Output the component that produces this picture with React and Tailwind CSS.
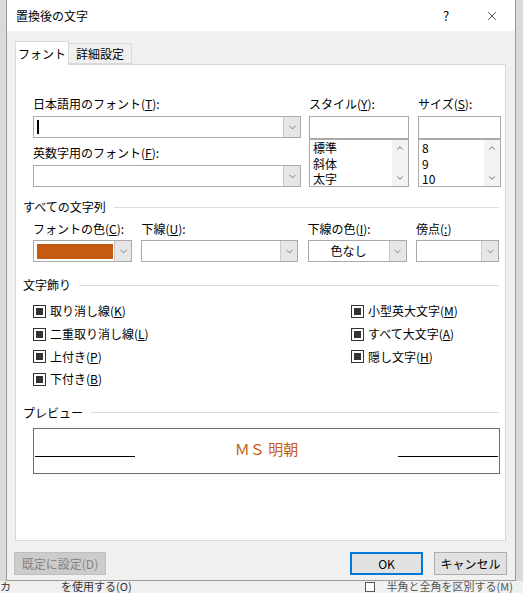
import { ChevronDown, ChevronUp, X } from "lucide-react";

const font = { fontFamily: '"Noto Sans CJK JP", "Noto Sans", sans-serif' };

function DropBtn() {
  return (
    <div className="w-[17px] h-full bg-[#e6e6e6] border-l border-[#c8c8c8] flex items-center justify-center">
      <ChevronDown size={11} strokeWidth={1.5} className="text-[#555]" />
    </div>
  );
}

function Combo({ width, children }) {
  return (
    <div className={`${width} h-[22px] border border-[#a9a9a9] bg-white flex`}>
      <div className="flex-1 flex items-center">{children}</div>
      <DropBtn />
    </div>
  );
}

function ListBox({ width, items }) {
  return (
    <div className={`${width} h-[48px] border border-[#a9a9a9] bg-white flex overflow-hidden`}>
      <div className="flex-1 flex flex-col pl-[3px] leading-[15.5px]">
        {items.map((t) => (
          <span key={t}>{t}</span>
        ))}
      </div>
      <div className="w-[16px] bg-[#f3f3f3] flex flex-col justify-between items-center py-[3px]">
        <ChevronUp size={10} strokeWidth={2} className="text-[#505050]" />
        <ChevronDown size={10} strokeWidth={2} className="text-[#505050]" />
      </div>
    </div>
  );
}

function Header({ title }) {
  return (
    <div className="flex items-center h-[16px] gap-[8px]">
      <span className="leading-[16px]">{title}</span>
      <div className="flex-1 h-px bg-[#dcdcdc]" />
    </div>
  );
}

function Check({ label, keyChar }) {
  return (
    <div className="h-[22.7px] flex items-center gap-[4px]">
      <div className="w-[13px] h-[13px] border border-[#333] flex items-center justify-center">
        <div className="w-[7px] h-[7px] bg-[#333]" />
      </div>
      <span>
        {label}(<span className="underline">{keyChar}</span>)
      </span>
    </div>
  );
}

export default function App() {
  return (
    <div
      className="w-[523px] h-[593px] overflow-hidden bg-[#e9e9e9] flex flex-col text-[12px] text-black"
      style={font}
    >
      <div className="flex h-[581px]">
        <div className="w-[7px] bg-[#dadada] border-r border-[#9a9a9a]" />

        <div className="w-[508px] flex flex-col bg-[#f0f0f0] border-b border-[#9a9a9a]">
          {/* title bar */}
          <div className="h-[31px] bg-white flex items-center pl-[9px]">
            <span className="flex-1 text-[12px]">置換後の文字</span>
            <span className="w-[46px] text-center text-[13px]">?</span>
            <div className="w-[46px] flex justify-center">
              <X size={14} strokeWidth={1.2} />
            </div>
          </div>

          <div className="px-[8px] pt-[9px]">
            {/* tabs */}
            <div className="flex items-end h-[24px]">
              <div className="w-[54px] h-[24px] bg-white border border-b-0 border-[#d9d9d9] flex items-center justify-center relative top-px">
                フォント
              </div>
              <div className="w-[63px] h-[21px] border border-l-0 border-[#d9d9d9] flex items-center justify-center">
                詳細設定
              </div>
            </div>

            {/* panel */}
            <div className="w-[491px] h-[477px] bg-white border border-[#d9d9d9] pt-[31px] pl-[7px] pr-[6px]">
              <div className="flex pl-[10px] gap-[8px]">
                <div className="w-[268px] flex flex-col">
                  <span className="leading-[16px]">
                    日本語用のフォント(<span className="underline">T</span>):
                  </span>
                  <div className="mt-[4px]">
                    <Combo width="w-[268px]">
                      <div className="ml-[3px] w-[2px] h-[14px] bg-black" />
                    </Combo>
                  </div>
                  <span className="leading-[16px] mt-[7px]">
                    英数字用のフォント(<span className="underline">F</span>):
                  </span>
                  <div className="mt-[4px]">
                    <Combo width="w-[268px]" />
                  </div>
                </div>
                <div className="w-[100px] flex flex-col">
                  <span className="leading-[16px]">
                    スタイル(<span className="underline">Y</span>):
                  </span>
                  <div className="mt-[4px] h-[23px] border border-[#a9a9a9] bg-white" />
                  <ListBox width="w-[100px]" items={["標準", "斜体", "太字"]} />
                </div>
                <div className="w-[83px] flex flex-col ml-px">
                  <span className="leading-[16px]">
                    サイズ(<span className="underline">S</span>):
                  </span>
                  <div className="mt-[4px] h-[23px] border border-[#a9a9a9] bg-white" />
                  <ListBox width="w-[83px]" items={["8", "9", "10"]} />
                </div>
              </div>

              <div className="mt-[12px]">
                <Header title="すべての文字列" />
              </div>

              <div className="flex pl-[10px] mt-[6px]">
                <div className="w-[109px] flex flex-col gap-[3px]">
                  <span className="leading-[16px]">
                    フォントの色(<span className="underline">C</span>):
                  </span>
                  <Combo width="w-[99px]">
                    <div className="ml-[3px] w-[76px] h-[15px] bg-[#c55a11]" />
                  </Combo>
                </div>
                <div className="w-[167px] flex flex-col gap-[3px]">
                  <span className="leading-[16px]">
                    下線(<span className="underline">U</span>):
                  </span>
                  <Combo width="w-[157px]" />
                </div>
                <div className="w-[109px] flex flex-col gap-[3px]">
                  <span className="leading-[16px]">
                    下線の色(<span className="underline">I</span>):
                  </span>
                  <Combo width="w-[99px]">
                    <span className="flex-1 text-center">色なし</span>
                  </Combo>
                </div>
                <div className="w-[83px] flex flex-col gap-[3px]">
                  <span className="leading-[16px]">
                    傍点(<span className="underline">:</span>)
                  </span>
                  <Combo width="w-[83px]" />
                </div>
              </div>

              <div className="mt-[15px]">
                <Header title="文字飾り" />
              </div>

              <div className="flex pl-[10px] mt-[7px]">
                <div className="w-[318px] flex flex-col">
                  <Check label="取り消し線" keyChar="K" />
                  <Check label="二重取り消し線" keyChar="L" />
                  <Check label="上付き" keyChar="P" />
                  <Check label="下付き" keyChar="B" />
                </div>
                <div className="flex flex-col">
                  <Check label="小型英大文字" keyChar="M" />
                  <Check label="すべて大文字" keyChar="A" />
                  <Check label="隠し文字" keyChar="H" />
                </div>
              </div>

              <div className="mt-[14px]">
                <Header title="プレビュー" />
              </div>

              <div className="ml-[10px] mt-[7px] w-[467px] h-[46px] border border-[#6d6d6d] flex items-start pt-[27px] px-px">
                <div className="w-[100px] h-px bg-black" />
                <div className="flex-1 flex justify-center">
                  <span className="text-[15px] text-[#c55a11] leading-[18px] -mt-[16px]">
                    ＭＳ 明朝
                  </span>
                </div>
                <div className="w-[100px] h-px bg-black" />
              </div>
            </div>

            {/* buttons */}
            <div className="flex mt-[11px] items-center">
              <div className="-ml-px w-[92px] h-[23px] bg-[#cccccc] border border-[#bfbfbf] text-[#838383] flex items-center justify-center">
                既定に設定(D)
              </div>
              <div className="flex-1" />
              <div className="w-[73px] h-[23px] bg-[#e1e1e1] border-2 border-[#0078d7] flex items-center justify-center">
                OK
              </div>
              <div className="ml-[11px] w-[73px] h-[23px] bg-[#e1e1e1] border border-[#adadad] flex items-center justify-center">
                キャンセル
              </div>
            </div>
          </div>
        </div>

        <div className="w-[8px] bg-[#dadada] border-l border-[#9a9a9a]" />
      </div>

      <div className="flex-1 flex items-start text-[#333] bg-[#f0f0f0] text-[11px] leading-[11px] whitespace-nowrap">
        <span>カ</span>
        <span className="ml-[50px]">を使用する(O)</span>
        <div className="ml-[233px] mt-[1px] w-[10px] h-[10px] border border-[#555] bg-white" />
        <span className="ml-[12px] text-[#555]">半角と全角を区別する(M)</span>
      </div>
    </div>
  );
}
